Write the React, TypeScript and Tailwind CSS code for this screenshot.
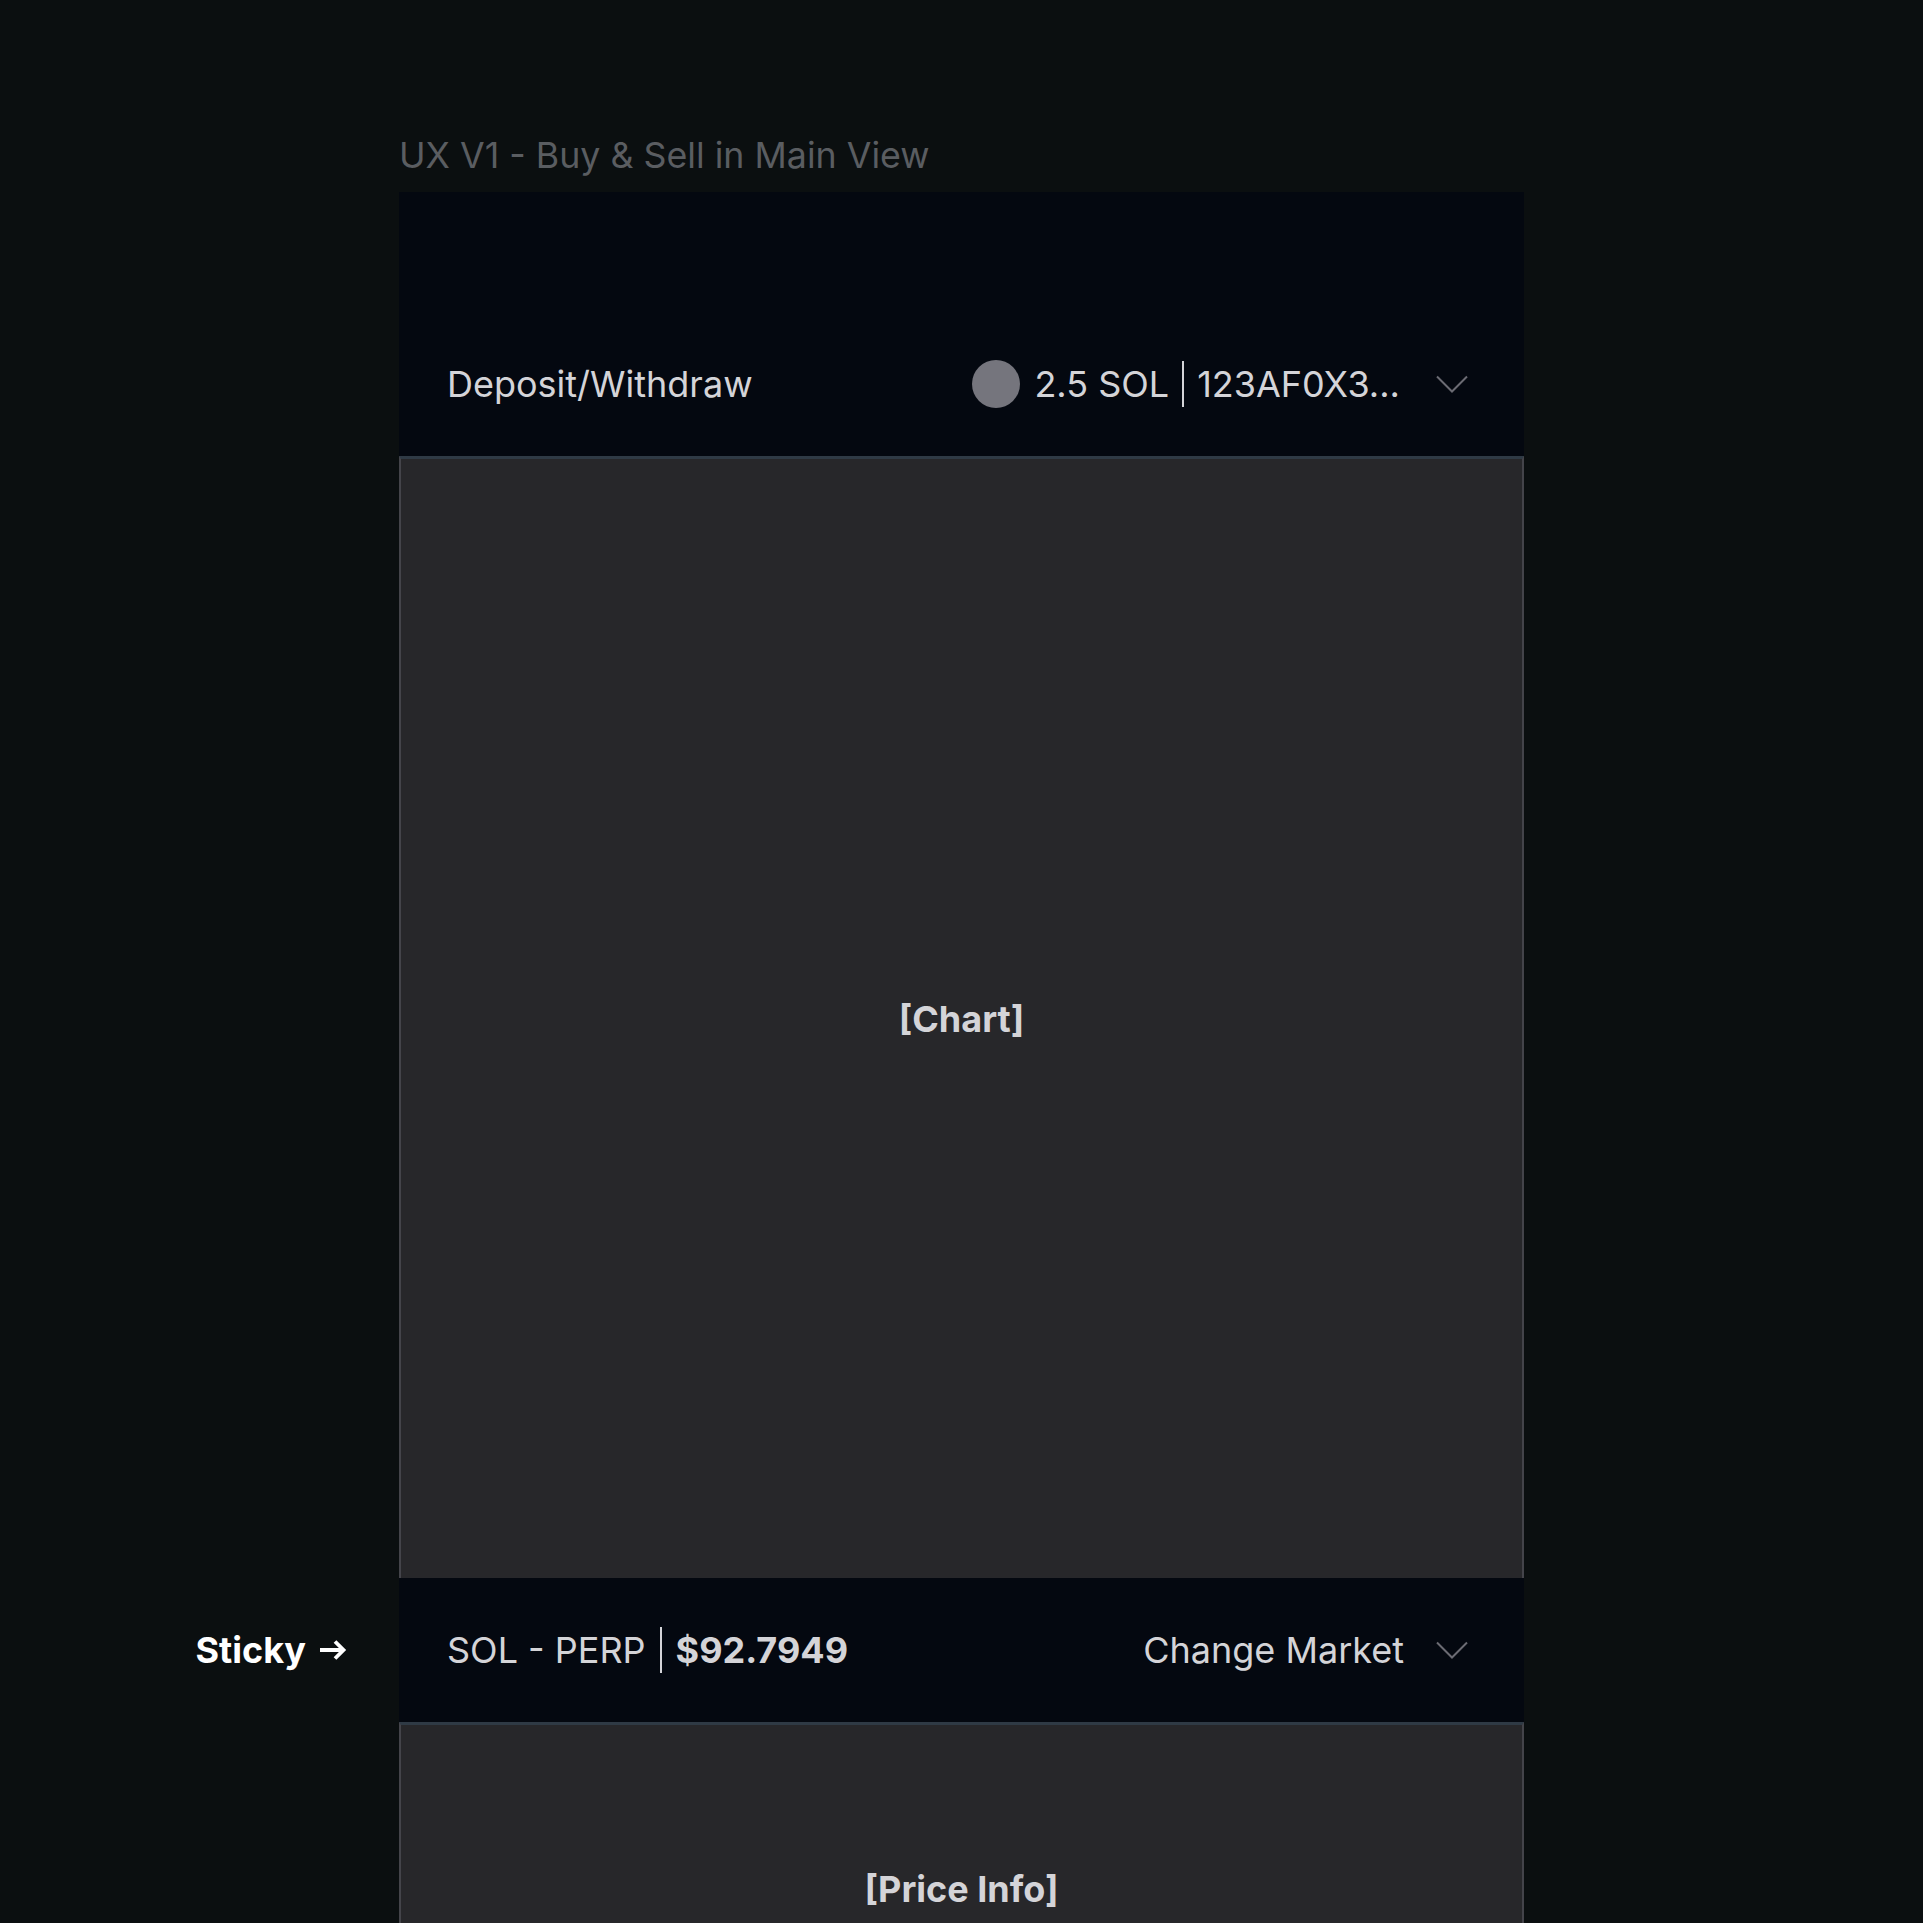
import React from "react";

const Chevron: React.FC = () => (
  <div className="flex h-12 w-12 items-center justify-center">
    <svg width="32" height="18" viewBox="0 0 32 18" fill="none">
      <path d="M1 1.5 16 16.5 31 1.5" stroke="#6b6b73" strokeWidth="2" />
    </svg>
  </div>
);

const App: React.FC = () => {
  return (
    <div className="h-[1923px] w-full overflow-hidden bg-[#0b0f10] font-['Inter',sans-serif] text-[36px]">
      <div className="ml-[399px] w-[1125px] pt-[133px]">
        <h1 className="mb-[15px] h-[44px] text-[35.75px] leading-[44px] font-normal text-[#5a5d61]">
          UX V1 - Buy &amp; Sell in Main View
        </h1>

        <div className="bg-[#040810] pt-[120px]">
          <div className="flex h-[144px] items-center justify-between pl-12 pr-12 text-[#d4d4d8]">
            <span>Deposit/Withdraw</span>
            <div className="flex items-center">
              <div className="mr-[14px] h-12 w-12 rounded-full bg-[#75757d]" />
              <span>2.5 SOL</span>
              <div className="mx-[13px] h-[46px] w-[2px] bg-[#d4d4d8]" />
              <span>123AF0X3...</span>
              <div className="ml-[28px]">
                <Chevron />
              </div>
            </div>
          </div>
        </div>

        <div className="flex h-[1122px] items-center justify-center border-x-2 border-t-[3px] border-x-[#44444a] border-t-[#2f3a45] bg-[#27272a]">
          <span className="font-bold text-[#d4d4d8]">[Chart]</span>
        </div>

        <div className="relative flex h-[144px] items-center justify-between bg-[#040810] pl-12 pr-12 text-[#d4d4d8]">
          <div className="absolute right-full mr-[52px] flex items-center gap-[13px] whitespace-nowrap font-bold text-white">
            <span>Sticky</span>
            <svg width="28" height="20" viewBox="0 0 28 20" fill="none">
              <path d="M1 10h24M16 1.5l8.5 8.5-8.5 8.5" stroke="white" strokeWidth="3.8" />
            </svg>
          </div>
          <div className="flex items-center">
            <span>SOL - PERP</span>
            <div className="mx-[14px] h-[46px] w-[2px] bg-[#d4d4d8]" />
            <span className="font-bold">$92.7949</span>
          </div>
          <div className="flex items-center">
            <span>Change Market</span>
            <div className="ml-[24px]">
              <Chevron />
            </div>
          </div>
        </div>

        <div className="flex h-[331px] items-center justify-center border-x-2 border-t-[3px] border-x-[#44444a] border-t-[#2f3a45] bg-[#27272a]">
          <span className="font-bold text-[#d4d4d8]">[Price Info]</span>
        </div>
      </div>
    </div>
  );
};

export default App;
